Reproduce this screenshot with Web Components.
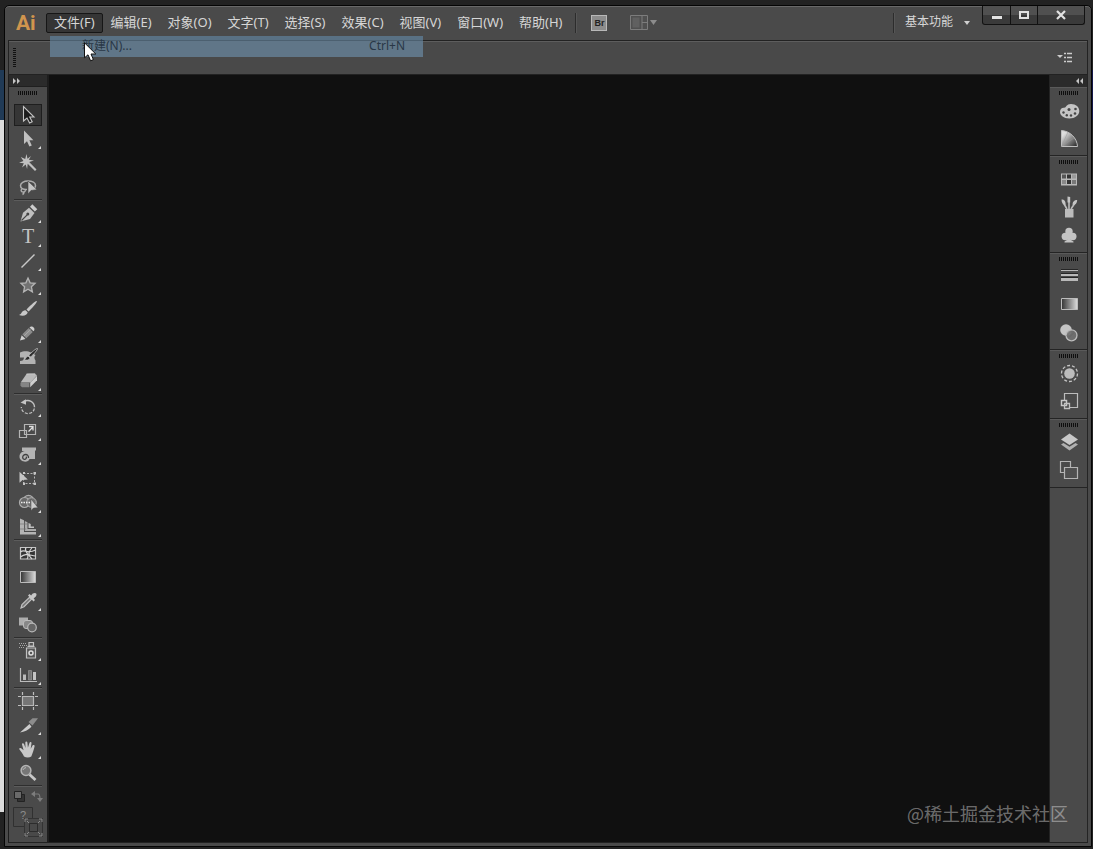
<!DOCTYPE html>
<html lang="zh-CN">
<head>
<meta charset="utf-8">
<meta name="viewport" content="width=device-width, initial-scale=1">
<title>Ai</title>
<style>
  html, body { margin: 0; height: 100%; }
  body {
    font-family: "Noto Sans", "Noto Sans CJK SC", sans-serif;
    font-size: 12px;
    color: #d6d6d6;
    background: #222;
    overflow: hidden;
  }
</style>
</head>
<body>
<ai-desktop>
  <app-window>
    <menu-bar slot="menu">
      <menu-item open>文件(F)</menu-item>
      <menu-item>编辑(E)</menu-item>
      <menu-item>对象(O)</menu-item>
      <menu-item>文字(T)</menu-item>
      <menu-item>选择(S)</menu-item>
      <menu-item>效果(C)</menu-item>
      <menu-item>视图(V)</menu-item>
      <menu-item>窗口(W)</menu-item>
      <menu-item>帮助(H)</menu-item>
      <span slot="workspace">基本功能</span>
    </menu-bar>
    <control-bar slot="control"></control-bar>
    <tool-box slot="tools"></tool-box>
    <panel-dock slot="dock">
      <panel-group icons="palette guide"></panel-group>
      <panel-group icons="swatches brushes symbols"></panel-group>
      <panel-group icons="stroke gradientPanel transparency"></panel-group>
      <panel-group icons="appearance styles"></panel-group>
      <panel-group icons="layers artboards"></panel-group>
    </panel-dock>
  </app-window>
  <menu-popup slot="overlay"><span>新建(N)...</span><span slot="key">Ctrl+N</span></menu-popup>
  <mouse-pointer slot="overlay"></mouse-pointer>
  <water-mark slot="overlay">@稀土掘金技术社区</water-mark>
</ai-desktop>

<script>
/* Tool icons are drawn on a 28 x 24 grid. */
const TOOLS = {
  select: ['选择', `<path d="M9.5 3.5V18l3.5-3 2.6 5 2.6-1.3-2.5-4.7h4.3z" fill="#1d1d1d" stroke="#c4c4c4" stroke-width="1.1"/>`],
  direct: ['直接选择', `<path d="M10 3.5V17l3-2.8 2.400 5.300 2.400-1.100-2.400-5.100h4z" fill="#c0c0c0"/>`],
  wand: ['魔棒', `<path d="M12.5 3l1 4.8L17 5l-2.2 3.8 5.2.7-4.8 1.4 7.3 7.6-1.5 1.5-7.3-7.2-.6 5.2-1.4-4.6L8 16.5l1.8-4.2-4.8-.6 4.4-1.8L6.800 6l4.400 2z" fill="#c0c0c0"/>`],
  lasso: ['套索', `<path d="M13 14.500c-4 .3-6.500-1.200-6.500-3.700C6.500 8 9.800 6 14 6s7.500 1.800 7.500 4.500-1.500 3.500-3 4M8 14c-1.500 1-1 3 1 3s3-1.500 2-2.700M10 17c0 1.500-.5 2-1.500 2.500" fill="none" stroke="#adadad" stroke-width="1.500"/><path d="M14 6v13l3-3.500 6-.8z" fill="#c4c4c4" stroke="#444" stroke-width=".6"/>`],
  pen: ['钢笔', `<path d="M6.500 20.500L9 11.800l6-5 5.500 5.200-4.500 6z" fill="#bfbfbf"/><path d="M16 5.700l2.300-2.500 5 5-2.500 2.200z" fill="#ccc"/><path d="M7.500 19.500l5.700-5.700" stroke="#444" stroke-width="1.200"/><circle cx="13.800" cy="13" r="1.500" fill="#444"/>`],
  type: ['文字', `<text x="14" y="18" text-anchor="middle" font-family="Liberation Serif, serif" font-size="20" fill="#c4c4c4">T</text>`],
  line: ['直线段', `<path d="M7.500 18.500L20.500 5.500" stroke="#c8c8c8" stroke-width="1.400"/>`],
  star: ['星形', `<path d="M14 5l2.100 4.800 5 .5-3.700 3.500 1 5.100-4.400-2.700-4.400 2.700 1-5.100-3.700-3.500 5-.5z" fill="#727272" stroke="#b4b4b4" stroke-width="1.300"/>`],
  brush: ['画笔', `<path d="M22.800 4c1 .9-5.800 8.500-8.300 10.400l-2-1.900C14.500 10 21.800 3.200 22.800 4z" fill="#c8c8c8"/><path d="M11.500 13.200l2.200 2.100c-.5 3-4.500 4.500-8.700 2.700 3-.8 2.500-4.900 6.500-4.800z" fill="#c8c8c8"/>`],
  pencil: ['铅笔', `<path d="M6 19.500l1.700-5.300 3.800 3.700z" fill="#d0d0d0"/><path d="M8.300 13.300l6.500-6.200 3.900 3.800-6.400 6.300z" fill="#8c8c8c"/><path d="M15.500 6.400c2.500-2.500 6.800 1.300 4 3.900z" fill="#d0d0d0"/><path d="M10 15l6.500-6.300" stroke="#aaa"/>`],
  blob: ['斑点画笔', `<path d="M6 7.500c4-2 8-1.500 11 0l4.500 2.500c-1.500 1.500-1.500 3.500 0 5.500V19H6v-3c2.500 0 4-1 4-3.500H6z" fill="#b2b2b2"/><path d="M23.500 3.500c.7.800-4.500 6.800-7 8.500l-1.700-1.700c2-2.300 8-7.600 8.700-6.800zM14 11l2 2c-1 2.500-3.500 2.500-6 1.500 2.200-.6 2-3.100 4-3.500z" fill="#2b2b2b" stroke="#c0c0c0" stroke-width=".8"/>`],
  eraser: ['橡皮擦', `<path d="M12.500 5h8.700l1.800 1.300-6.500 7.200H6.700z" fill="#b9b9b9"/><path d="M6.500 14h8.800v4.300H8l-1.500-1.500z" fill="#858585"/><path d="M16.200 13.700L23 6.800v4.400l-6.800 7.100z" fill="#cfcfcf"/><path d="M12.500 5l2.500-.2h6.200" stroke="#ddd" stroke-width=".8"/>`],
  rotate: ['旋转', `<path d="M9.500 6.700c5.500-3 11 .2 11 5.600" fill="none" stroke="#c0c0c0" stroke-width="1.400"/><path d="M20.300 13.500c-1.200 7-12.300 7-13-1.500" fill="none" stroke="#c0c0c0" stroke-width="1.300" stroke-dasharray="3 1.500"/><path d="M6.500 7.500l5.500-3.200v5.400z" fill="#c4c4c4"/>`],
  scale: ['比例缩放', `<path d="M10.500 5.500h11v10h-11zM5.500 11.500h7v7h-7z" fill="none" stroke="#b4b4b4" stroke-width="1.200"/><path d="M14.500 12.500l4-4M15 7.500h4v4" fill="none" stroke="#e0e0e0" stroke-width="1.300"/>`],
  width: ['宽度', `<path d="M8 4.500h14v3h-1V16h-5.500c-1.500 4.500-10.200 3-10-2.500C5.600 9.500 9 8 12 8H8z" fill="#b4b4b4"/><path d="M14.500 15c.5-4.700-6-4.500-5.800-.5.300 3 4.400 2.200 3.600-.8" fill="none" stroke="#404040" stroke-width="1.300"/>`],
  free: ['自由变换', `<path d="M9.500 6.500h11v10h-11z" fill="none" stroke="#b4b4b4" stroke-dasharray="2 1.500"/><path d="M9 5h2v2H9zM19.500 5h2.500v2.500h-2.500zM19.500 15.500H22V18h-2.500zM9 15.500h2V18H9z" fill="#c4c4c4"/><path d="M5.500 4.800v11l3-2.800 5.300-.5z" fill="#c4c4c4"/>`],
  builder: ['形状生成器', `<circle cx="14.500" cy="9.500" r="5.200" fill="#666" stroke="#adadad" stroke-width="1.200"/><circle cx="10.500" cy="11.500" r="5" fill="#686868" stroke="#adadad" stroke-width="1.200"/><circle cx="17.500" cy="11.500" r="4.800" fill="#6f6f6f" stroke="#adadad"/><path d="M7 11.500h11" stroke="#eee" stroke-width="1.600" stroke-dasharray="1.500 1"/><path d="M17 8v11.500l2.500-2.500 4.500-.3z" fill="#ccc" stroke="#444" stroke-width=".5"/>`],
  perspective: ['透视网格', `<path d="M6 3.500l4 1.800V17h12v2.500H6z" fill="#b4b4b4"/><path d="M10.800 6l2.700 1.200V14H22v2H10.800z" fill="#aaa"/><path d="M14.500 8l2.200 1v2.500H20v1.500h-5.500z" fill="#c0c0c0"/><path d="M6 9h8M6 14h6" stroke="#777" stroke-width=".7"/>`],
  mesh: ['网格', `<path d="M6.500 6.500h15v11.500h-15z" fill="#333" stroke="#c4c4c4" stroke-width="1.200"/><path d="M6.500 11c4-4 6 3 15-2M6.500 16c5-4 8-2 15-1M12 6.500c-3 4 5 6 1 11.500M18 6.500c-3 4-5 7 0 11.500" fill="none" stroke="#d4d4d4" stroke-width="1.200"/>`],
  gradient: ['渐变', `<path d="M6.500 6.500h15v11h-15z" fill="url(#r)" stroke="#bcbcbc"/>`],
  dropper: ['吸管', `<path d="M7 19l1-3.500 7.500-7.200 2 2L10 17.700z" fill="#777" stroke="#c0c0c0" stroke-width="1.200"/><path d="M14 6.500l1.500-1.500 1.600 1.500c2-4 7-3 5 .5-.5 1-1.700 1.800-2.500 2.500l1.400 1.500-1.500 1.500z" fill="#c8c8c8"/>`],
  blend: ['混合', `<path d="M5 4.500h9v8H5z" fill="#adadad"/><rect x="9.500" y="7.500" width="9" height="8" rx="2.500" fill="#888" stroke="#bbb"/><circle cx="18" cy="14.500" r="4.300" fill="#666" stroke="#b8b8b8" stroke-width="1.200"/>`],
  spray: ['符号喷枪', `<path d="M5 4.500h8M6 6.500h7M5 8.500h6" stroke="#a8a8a8" stroke-dasharray="1 1"/><path d="M15 3.500h4.500V7H15zM12.500 9h9v10h-9z" fill="#565656" stroke="#c0c0c0" stroke-width="1.200"/><path d="M13.500 7.500h7" stroke="#c0c0c0"/><circle cx="17" cy="14" r="2" fill="none" stroke="#ddd" stroke-width="1.500"/>`],
  graph: ['柱形图', `<path d="M6.500 5v13.500H23" fill="none" stroke="#bcbcbc" stroke-width="1.200"/><path d="M9 11.500h3V17H9z" fill="#bbb"/><path d="M14.500 7.500h3V17h-3z" fill="#777" stroke="#aaa" stroke-width=".5"/><path d="M19 9h3v8h-3z" fill="#c4c4c4"/>`],
  artboard: ['画板', `<path d="M8.500 7.500h11v9h-11z" fill="#767676" stroke="#b8b8b8" stroke-width="1.200"/><path d="M8.500 3v3M19.500 3v3M8.500 18v3M19.500 18v3M4 7.500h3M21 7.500h3M4 16.500h3M21 16.500h3" stroke="#bebebe" stroke-width="1.200"/>`],
  slice: ['切片', `<path d="M6 19.500l9.500-8.500 2 2.800C14 17.500 10.500 18.700 6 19.500z" fill="#ccc"/><path d="M14.500 9l4-3.700H24l-5.500 7.200z" fill="#8c8c8c"/>`],
  hand: ['抓手', `<path d="M10 19.500C9 16.500 6.500 14 5.300 12.200c-.2-1.700 1.700-1.500 2.500-.4l1.800 1.500L8 7.500c-.2-1.500 1.500-1.900 2-.5l1.500 4-.2-5.500c.1-1.400 1.900-1.400 2.100 0l.5 5.200 1.600-5c.6-1.200 2.200-.7 2 .6l-.8 5.500 2-3.500c1-.9 2.200-.2 1.900.9-.8 4-2 6.500-3.300 10.300-2 1.400-5.300 1.300-7.300 0z" fill="#c8c8c8"/>`],
  zoom: ['缩放', `<path d="M15.500 13.500l6 5.500" stroke="#c8c8c8" stroke-width="2.800"/><circle cx="12" cy="9.500" r="4.900" fill="#777" stroke="#b4b4b4" stroke-width="1.500"/><path d="M9 9c.5-1.500 1.500-2.200 3-2.300" fill="none" stroke="#bcbcbc"/>`]
};
const TOOL_GROUPS = [
  'select direct+ wand lasso',
  'pen+ type+ line+ star+ brush pencil+ blob eraser+',
  'rotate+ scale+ width+ free builder+ perspective+',
  'mesh gradient dropper+ blend',
  'spray+ graph+',
  'artboard slice+ hand+ zoom'
];

/* Panel icons are drawn on a 37 x 28 grid. */
const PANELS = {
  palette: ['颜色', `<path d="M10 15c0-3.200 2-4.500 4-4.300 2.500.2 2-3.700 7-3.700 5 0 8.300 3 8.300 7 0 4.300-4.300 7.500-10 7.500-5.500 0-9.300-3-9.300-6.500z" fill="#c4c4c4"/><g fill="#454545"><circle cx="13.500" cy="15.500" r="1.200"/><circle cx="16.800" cy="18.300" r="1.200"/><circle cx="21" cy="18.500" r="1.200"/><circle cx="25" cy="16.500" r="1.300"/><circle cx="25.500" cy="12" r="1.300"/><circle cx="19" cy="12.500" r="1.500"/></g>`],
  guide: ['颜色参考', `<path d="M11.500 5.500C20 6 27 13 27.500 21.500h-16z" fill="url(#d)" stroke="#c0c0c0"/><path d="M11.500 21.500L18 7M11.500 21.500l13-9" stroke="#999" stroke-width=".5"/>`],
  swatches: ['色板', `<path d="M11 7.500h16v12H11z" fill="#b8b8b8"/><path d="M12 8.500h4v4h-4z" fill="#555"/><path d="M17 8.500h4v4h-4z" fill="#333"/><path d="M22 8.500h4v4h-4z" fill="#999"/><path d="M12 14h4v4h-4z" fill="#888"/><path d="M17 14h4v4h-4z" fill="#333"/><path d="M22 14h4v4h-4z" fill="#777"/>`],
  brushes: ['画笔', `<path d="M15 15h8.500v8.500H15z" fill="#bcbcbc"/><path d="M17 15l-3.500-6M19 15V6M21 15l4-6" stroke="#bcbcbc" stroke-width="1.600"/><path d="M11.500 5.500c3 0 4.500 2 4 5.500-2.500-.5-4-2-4-5.500zM17.500 2.500l2.700.5v5.500h-2.700zM27.200 6c-3 0-5 2-4.500 5 2.800 0 4.500-2 4.500-5z" fill="#c4c4c4"/>`],
  symbols: ['符号', `<g fill="#c4c4c4"><circle cx="19" cy="9.500" r="3.700"/><circle cx="15.300" cy="14.500" r="3.700"/><circle cx="22.800" cy="14.500" r="3.700"/><path d="M18 12h2c0 5 .8 6.500 3.500 7.500v1h-9v-1c2.700-1 3.500-2.500 3.500-7.500z"/></g>`],
  stroke: ['描边', `<path d="M11 6.500h17M11 10.500h17M11 14.500h17" stroke="#262626"/><path d="M11 7h17v1H11zM11 11h17v2H11zM11 15h17v3H11z" fill="#b8b8b8"/>`],
  gradientPanel: ['渐变', `<path d="M11.500 7.500h16v11h-16z" fill="url(#r)" stroke="#bcbcbc"/>`],
  transparency: ['透明度', `<circle cx="16" cy="11" r="5.800" fill="#c4c4c4"/><circle cx="21.500" cy="16.300" r="5.500" fill="#777" fill-opacity=".8" stroke="#bcbcbc" stroke-width="1.300"/><path d="M17 16.500l4.500-4.500M19 18.500l5-5" stroke="#666"/>`],
  appearance: ['外观', `<circle cx="19.500" cy="13.500" r="5.300" fill="#bcbcbc"/><circle cx="19.500" cy="13.500" r="8" fill="none" stroke="#c4c4c4" stroke-width="1.300" stroke-dasharray="3 2"/>`],
  styles: ['图形样式', `<path d="M14.500 12V5.500h13v14H19" fill="none" stroke="#bcbcbc" stroke-width="1.200"/><path d="M11.500 12.500h5v5h-5z" fill="#444" stroke="#c8c8c8" stroke-width="1.500"/><path d="M14.500 15.500h5v5h-5z" fill="none" stroke="#c0c0c0" stroke-width="1.300"/>`],
  layers: ['图层', `<path d="M11 10.500L19.500 4.500l8.500 6-8.500 5.500z" fill="#c8c8c8"/><path d="M11 15.500l2.500-1.500 6 3.800 6-3.800 2.500 1.500-8.500 6z" fill="#b0b0b0"/>`],
  artboards: ['画板', `<path d="M14 15.500h-3.500v-11h10V10" fill="none" stroke="#b4b4b4" stroke-width="1.200"/><path d="M14.500 10.500h13v11h-13z" fill="#505050" stroke="#b4b4b4" stroke-width="1.200"/>`]
};

const RAMPS = `<defs>
  <linearGradient id="r"><stop offset="0" stop-color="#333"/><stop offset="1" stop-color="#ddd"/></linearGradient>
  <linearGradient id="d" x2="1" y2="1"><stop offset=".2" stop-color="#ddd"/><stop offset="1" stop-color="#222"/></linearGradient>
</defs>`;

const RESET = `button {
  display: block; margin: 0; padding: 0; border: 0; background: none;
  color: inherit; font: inherit; line-height: inherit; box-sizing: border-box;
}
svg { display: block; }`;

function element(name, css, html) {
  customElements.define(name, class extends HTMLElement {
    constructor() {
      super();
      this.attachShadow({ mode: 'open' }).innerHTML =
        `<style>${RESET}${css}</style>` + (typeof html === 'function' ? html(this) : html);
    }
  });
}

element('ai-desktop', `
  :host {
    display: block; position: relative; box-sizing: border-box; height: 100vh;
    padding: 5px 1px 2px 4px;
    background:
      linear-gradient(#203a56, #203a56) 0 70px / 4px 50px no-repeat,
      linear-gradient(#dcdcdc, #dcdcdc) 0 120px / 4px calc(100% - 157px) no-repeat,
      linear-gradient(#14184a, #14184a) 100% 70px / 1px 50px no-repeat,
      #222;
  }`, `<slot></slot><slot name="overlay"></slot>`);

element('app-window', `
  :host {
    display: flex; flex-direction: column; box-sizing: border-box; height: 100%;
    padding: 0 3px 3px; border: 1px solid #050505; border-radius: 5px 5px 0 0;
    background: #4a4a4a; box-shadow: inset 0 1px #686868;
  }
  main {
    flex: 1; min-height: 0; display: grid; grid-template-columns: 41px 1fr 39px;
    border-bottom: 1px solid #222; box-sizing: border-box;
  }
  .canvas { background: #101010; }`, `
  <slot name="menu"></slot><slot name="control"></slot>
  <main><slot name="tools"></slot><div class="canvas"></div><slot name="dock"></slot></main>`);

element('menu-item', `
  :host { display: block; }
  button { height: 20px; padding: 0 7px 2px; border: 1px solid transparent; border-radius: 2px; font-size: 13px; line-height: 16px; white-space: nowrap; }
  :host([open]) button { background: #353535; border-color: #161616; }`,
  `<button type="button"><slot></slot></button>`);

element('menu-bar', `
  :host { display: flex; align-items: center; height: 34px; flex: none; }
  .logo { width: 38px; padding-left: 8px; box-sizing: border-box; font: bold 21px/32px Roboto, sans-serif; color: #d0954e; }
  nav { display: flex; }
  .rule { width: 1px; height: 20px; background: #2c2c2c; border-right: 1px solid #565656; }
  .first { margin: 0 14px 0 5px; }
  .bridge { width: 16px; height: 16px; border: 1px solid #b8b8b8; background: #8c8c8c; color: #222; font: bold 9px/13px "Liberation Sans", sans-serif; }
  .arrange { margin-left: 23px; }
  .space { margin-left: auto; display: flex; gap: 10px; align-items: center; margin-right: 12px; }
  .work { display: flex; align-items: center; gap: 11px; line-height: 18px; padding-bottom: 2px; }
  .window { display: flex; align-self: flex-start; margin-right: 3px; border: 1px solid #121212; border-top: 0; border-radius: 0 0 3px 3px; background: linear-gradient(#505050 50%, #3a3a3a 50%); }
  .window button { height: 18px; border-right: 1px solid #121212; width: 28px; display: grid; place-items: center; }
  .window button:nth-child(2) { width: 27px; }
  .window button:last-child { width: 46px; border: 0; }`, `
  <span class="logo">Ai</span>
  <nav><slot></slot></nav>
  <span class="rule first"></span>
  <button class="bridge" type="button">Br</button>
  <button class="arrange" type="button" aria-label="排列文档"><svg width="28" height="16"><path d="M.5.500h17v14H.5zM12 .5v14M12 7.500h5.500" fill="#505050" stroke="#7c7c7c"/><path d="M2.500 2.500h7v10h-7z" fill="#606060"/><path d="M20 5h7l-3.500 5z" fill="#8c8c8c"/></svg></button>
  <div class="space"><span class="rule"></span>
    <button class="work" type="button"><slot name="workspace"></slot><svg width="6" height="6"><path d="M0 2h6L3 6z" fill="#d0d0d0"/></svg></button></div>
  <div class="window">
    <button type="button" aria-label="最小化"><svg width="12" height="12"><path d="M1 7h10v3H1z" fill="#e2e2e2"/></svg></button>
    <button type="button" aria-label="最大化"><svg width="12" height="12"><path d="M2 3h8v6H2z" fill="none" stroke="#e2e2e2" stroke-width="2"/></svg></button>
    <button type="button" aria-label="关闭"><svg width="12" height="12"><path d="M2 2l8 8M10 2l-8 8" stroke="#e2e2e2" stroke-width="2.200"/></svg></button>
  </div>`);

element('control-bar', `
  :host {
    display: flex; align-items: center; justify-content: space-between; flex: none; box-sizing: border-box;
    height: 35px; padding: 0 14px 0 4px; border: 1px solid #222; background: #494949; box-shadow: inset 0 1px #5d5d5d;
  }
  .grip { width: 3px; height: 20px; background: repeating-linear-gradient(#111 0 1px, #4a4a4a 1px 2px); }`, `
  <span class="grip"></span>
  <button type="button" aria-label="面板菜单"><svg width="16" height="12"><path d="M0 3h6L3 6z" fill="#ccc"/><path d="M7 1.500h2M10 1.500h5M7 5.500h2M10 5.500h5M7 9.500h2M10 9.500h5" stroke="#ccc" stroke-width="1.500"/></svg></button>`);

element('grip-bar', `
  :host { display: block; width: 20px; height: 4px; margin: 4px auto 0; background: repeating-linear-gradient(90deg, #0e0e0e 0 1px, #4a4a4a 1px 2px); }`, ``);

element('tool-button', `
  :host { display: block; width: 28px; height: 24px; }
  :host([active]) button { background: linear-gradient(#1e1e1e, #1e1e1e) center / 28px 22px no-repeat; }
  :host([active]) svg { background: linear-gradient(#353535, #353535) center / 26px 20px no-repeat; }`,
  el => {
    const [label, art] = TOOLS[el.getAttribute('tool')];
    const corner = el.hasAttribute('more') ? '<path d="M27 19v3h-3z" fill="#ddd"/>' : '';
    return `<button type="button" aria-label="${label}"><svg width="28" height="24">${RAMPS}${art}${corner}</svg></button>`;
  });

element('tool-box', `
  :host { display: flex; flex-direction: column; border: solid #1d1d1d; border-width: 0 2px 0 1px; background: #4a4a4a; }
  header { height: 12px; background: #2b2b2b; flex: none; border-bottom: 1px solid #1f1f1f; box-sizing: border-box; }
  header svg { margin-left: 3px; }
  .tools { padding: 8px 5px 0; }
  .group { border-bottom: 1px solid #5c5c5c; box-shadow: inset 0 -1px #2e2e2e; padding-bottom: 1px; }
  .mini { display: flex; justify-content: space-between; padding: 3px 4px 0; }
  .paint { margin: 4px 0 0 4px; }`, `
  <header><button type="button" aria-label="展开"><svg width="10" height="11"><path d="M1 3v6l3-3zM5 3v6l3-3z" fill="#c4c4c4"/></svg></button></header>
  <grip-bar></grip-bar>
  <div class="tools">${TOOL_GROUPS.map(group => `<div class="group">${group.split(' ').map(name =>
    `<tool-button tool="${name.replace('+', '')}"${name.endsWith('+') ? ' more' : ''}${name === 'select' ? ' active' : ''}></tool-button>`).join('')}</div>`).join('')}</div>
  <div class="mini">
    <button type="button" aria-label="默认填色和描边"><svg width="13" height="13"><path d="M4.500 4.500h7v7h-7z" fill="#333" stroke="#222"/><path d="M1.500 1.500h7v7h-7z" fill="#6a6a6a" stroke="#222"/></svg></button>
    <button type="button" aria-label="互换填色和描边"><svg width="13" height="13"><path d="M3 4h5q2 0 2 5" fill="none" stroke="#7d7d7d" stroke-width="1.200"/><path d="M1 4l4-3v6zM7 8h6l-3 4z" fill="#7d7d7d"/></svg></button>
  </div>
  <button class="paint" type="button" aria-label="填色和描边"><svg width="31" height="32">
    <path d="M.5.500h19v19H.5z" fill="#494949" stroke="#303030"/>
    <text x="10" y="12" text-anchor="middle" font-family="Liberation Sans, sans-serif" font-size="11" fill="#8c8c8c">?</text>
    <path d="M11.500 11.500h18v18h-18z" fill="#494949" stroke="#333"/><path d="M16.500 16.500h8v8h-8z" fill="none" stroke="#2c2c2c"/>
    <path d="M12 15v-3h3M26 12h3v3M29 26v3h-3M15 29h-3v-3M14 14l2 2M27 14l-2 2M27 27l-2-2M14 27l2-2" fill="none" stroke="#8a8a8a"/></svg></button>`);

element('panel-group', `
  :host { display: block; border-bottom: 1px solid #242424; box-shadow: inset 0 1px #5a5a5a; padding-bottom: 2px; overflow: hidden; }
  .icons { padding-top: 2px; }`,
  el => `<grip-bar></grip-bar><div class="icons">${el.getAttribute('icons').split(' ').map(name =>
    `<button type="button" aria-label="${PANELS[name][0]}"><svg width="37" height="28">${RAMPS}${PANELS[name][1]}</svg></button>`).join('')}</div>`);

element('panel-dock', `
  :host { display: block; border: solid #242424; border-width: 0 1px; background: #4a4a4a; }
  header { height: 12px; background: #2b2b2b; display: flex; justify-content: flex-end; align-items: flex-start; padding-right: 3px; }`, `
  <header><button type="button" aria-label="展开面板"><svg width="10" height="11"><path d="M5 3v6L2 6zM9 3v6L6 6z" fill="#c4c4c4"/></svg></button></header>
  <slot></slot>`);

/* File menu caught while fading in, its first entry highlighted. */
element('menu-popup', `
  :host { position: absolute; left: 50px; top: 36px; width: 373px; }
  button { display: flex; justify-content: space-between; width: 100%; height: 21px; padding: 0 18px 0 32px; background: linear-gradient(#597184 0 4px, #4c6070 4px 5px, #607688 5px); color: #293746; line-height: 20px; }`,
  `<button type="button"><slot></slot><slot name="key"></slot></button>`);

element('mouse-pointer', `
  :host { position: absolute; left: 84px; top: 42px; pointer-events: none; }`,
  `<svg width="13" height="20"><path d="M.5.800v15l3.500-3 2.600 6 2.800-1.200L7 12h4.800z" fill="#fff" stroke="#111"/></svg>`);

element('water-mark', `
  :host { position: absolute; right: 25px; bottom: 22px; font: 18px/28px "Noto Sans CJK SC", sans-serif; color: rgba(255, 255, 255, .4); pointer-events: none; }`,
  `<slot></slot>`);
</script>
</body>
</html>
